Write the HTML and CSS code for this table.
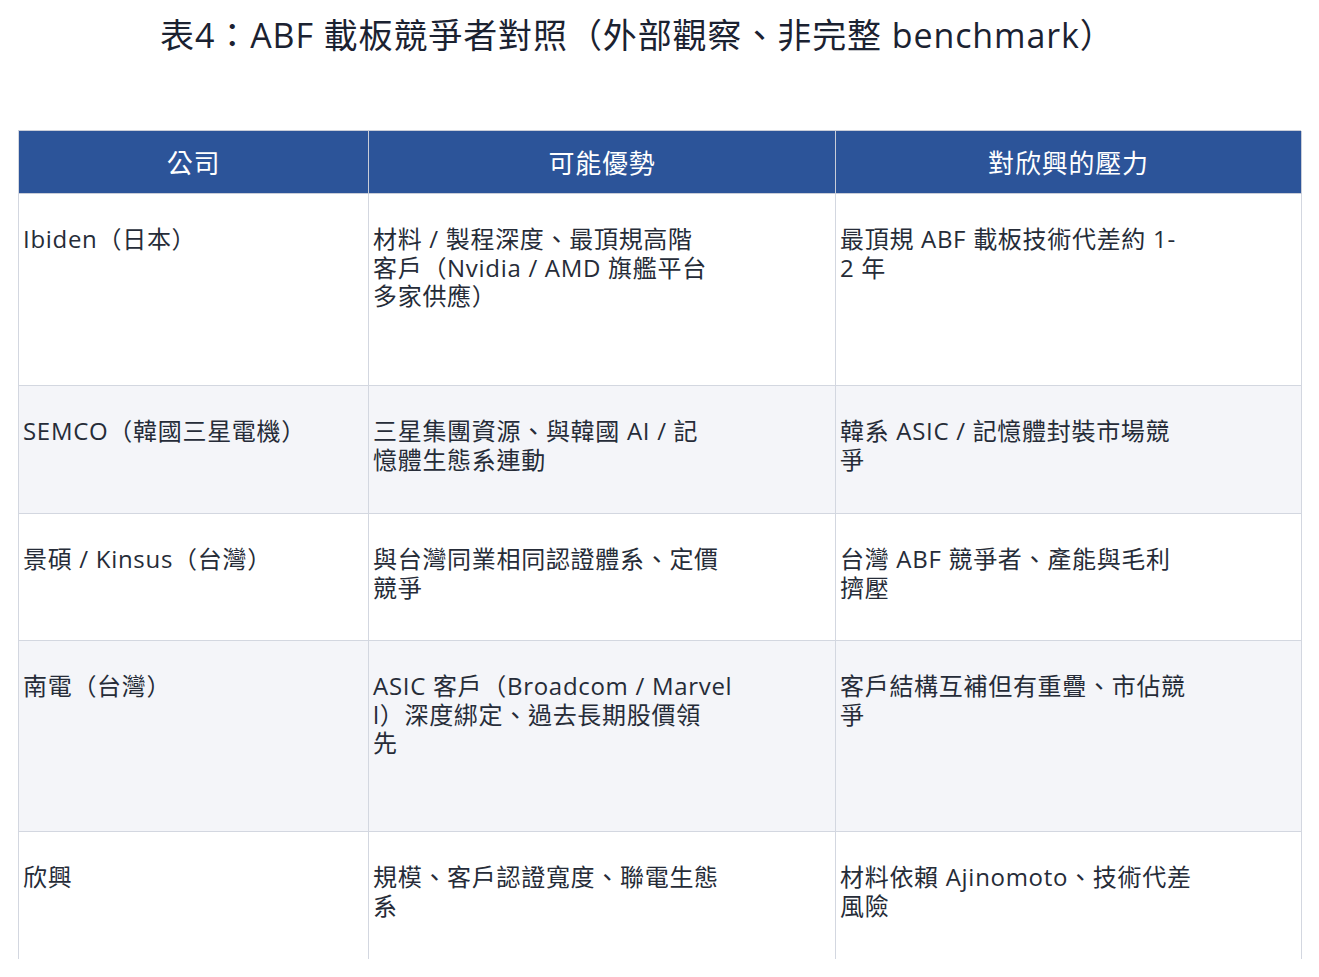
FILE: index.html
```html
<!DOCTYPE html>
<html lang="zh-Hant">
<head>
<meta charset="utf-8">
<title>表4：ABF 載板競爭者對照</title>
<link rel="stylesheet" href="styles.css">
</head>
<body>
<h1 class="title">表4：ABF 載板競爭者對照（外部觀察、非完整 benchmark）</h1>
<div class="table">
  <div class="th">公司</div>
  <div class="th">可能優勢</div>
  <div class="th">對欣興的壓力</div>

  <div class="td">Ibiden（日本）</div>
  <div class="td">材料 / 製程深度、最頂規高階<br>客戶（Nvidia / AMD 旗艦平台<br>多家供應）</div>
  <div class="td">最頂規 ABF 載板技術代差約 1-<br>2 年</div>

  <div class="td alt">SEMCO（韓國三星電機）</div>
  <div class="td alt">三星集團資源、與韓國 AI / 記<br>憶體生態系連動</div>
  <div class="td alt">韓系 ASIC / 記憶體封裝市場競<br>爭</div>

  <div class="td">景碩 / Kinsus（台灣）</div>
  <div class="td">與台灣同業相同認證體系、定價<br>競爭</div>
  <div class="td">台灣 ABF 競爭者、產能與毛利<br>擠壓</div>

  <div class="td alt">南電（台灣）</div>
  <div class="td alt">ASIC 客戶（Broadcom / Marvel<br>l）深度綁定、過去長期股價領<br>先</div>
  <div class="td alt">客戶結構互補但有重疊、市佔競<br>爭</div>

  <div class="td last">欣興</div>
  <div class="td last">規模、客戶認證寬度、聯電生態<br>系</div>
  <div class="td last">材料依賴 Ajinomoto、技術代差<br>風險</div>
</div>
</body>
</html>
```
FILE: styles.css
```css
html, body {
  margin: 0;
  padding: 0;
  background: #ffffff;
}
body {
  font-family: "Open Sans", "Noto Sans CJK TC", sans-serif;
  color: #262c38;
  padding: 0 18px;
}
.title {
  margin: 0;
  padding: 13px 0 0 142px;
  height: 130px;
  box-sizing: border-box;
  font-size: 34px;
  font-weight: 400;
  line-height: 44px;
  letter-spacing: 0.9px;
  color: #1b2231;
  white-space: nowrap;
}
.table {
  display: grid;
  width: 1283px;
  grid-template-columns: 350px 467px 466px;
  grid-template-rows: 63px 192px 128px 127px 191px 127px;
  border-top: 1px solid #c9cdd8;
  border-left: 1px solid #d3d7e0;
  box-sizing: border-box;
}
.th {
  background: #2c5499;
  color: #ffffff;
  font-size: 26px;
  font-weight: 400;
  display: flex;
  align-items: center;
  justify-content: center;
  border-right: 1px solid #c9cdd8;
  border-bottom: 1px solid #c9cdd8;
  letter-spacing: 0.8px;
}
.td {
  font-size: 24px;
  line-height: 28.5px;
  letter-spacing: 0.7px;
  padding: 31px 5px 0 4px;
  white-space: nowrap;
  border-right: 1px solid #d3d7e0;
  border-bottom: 1px solid #d3d7e0;
  background: #ffffff;
}
.td.alt {
  background: #f4f5f9;
}
.td.last {
  border-bottom: none;
}
```
